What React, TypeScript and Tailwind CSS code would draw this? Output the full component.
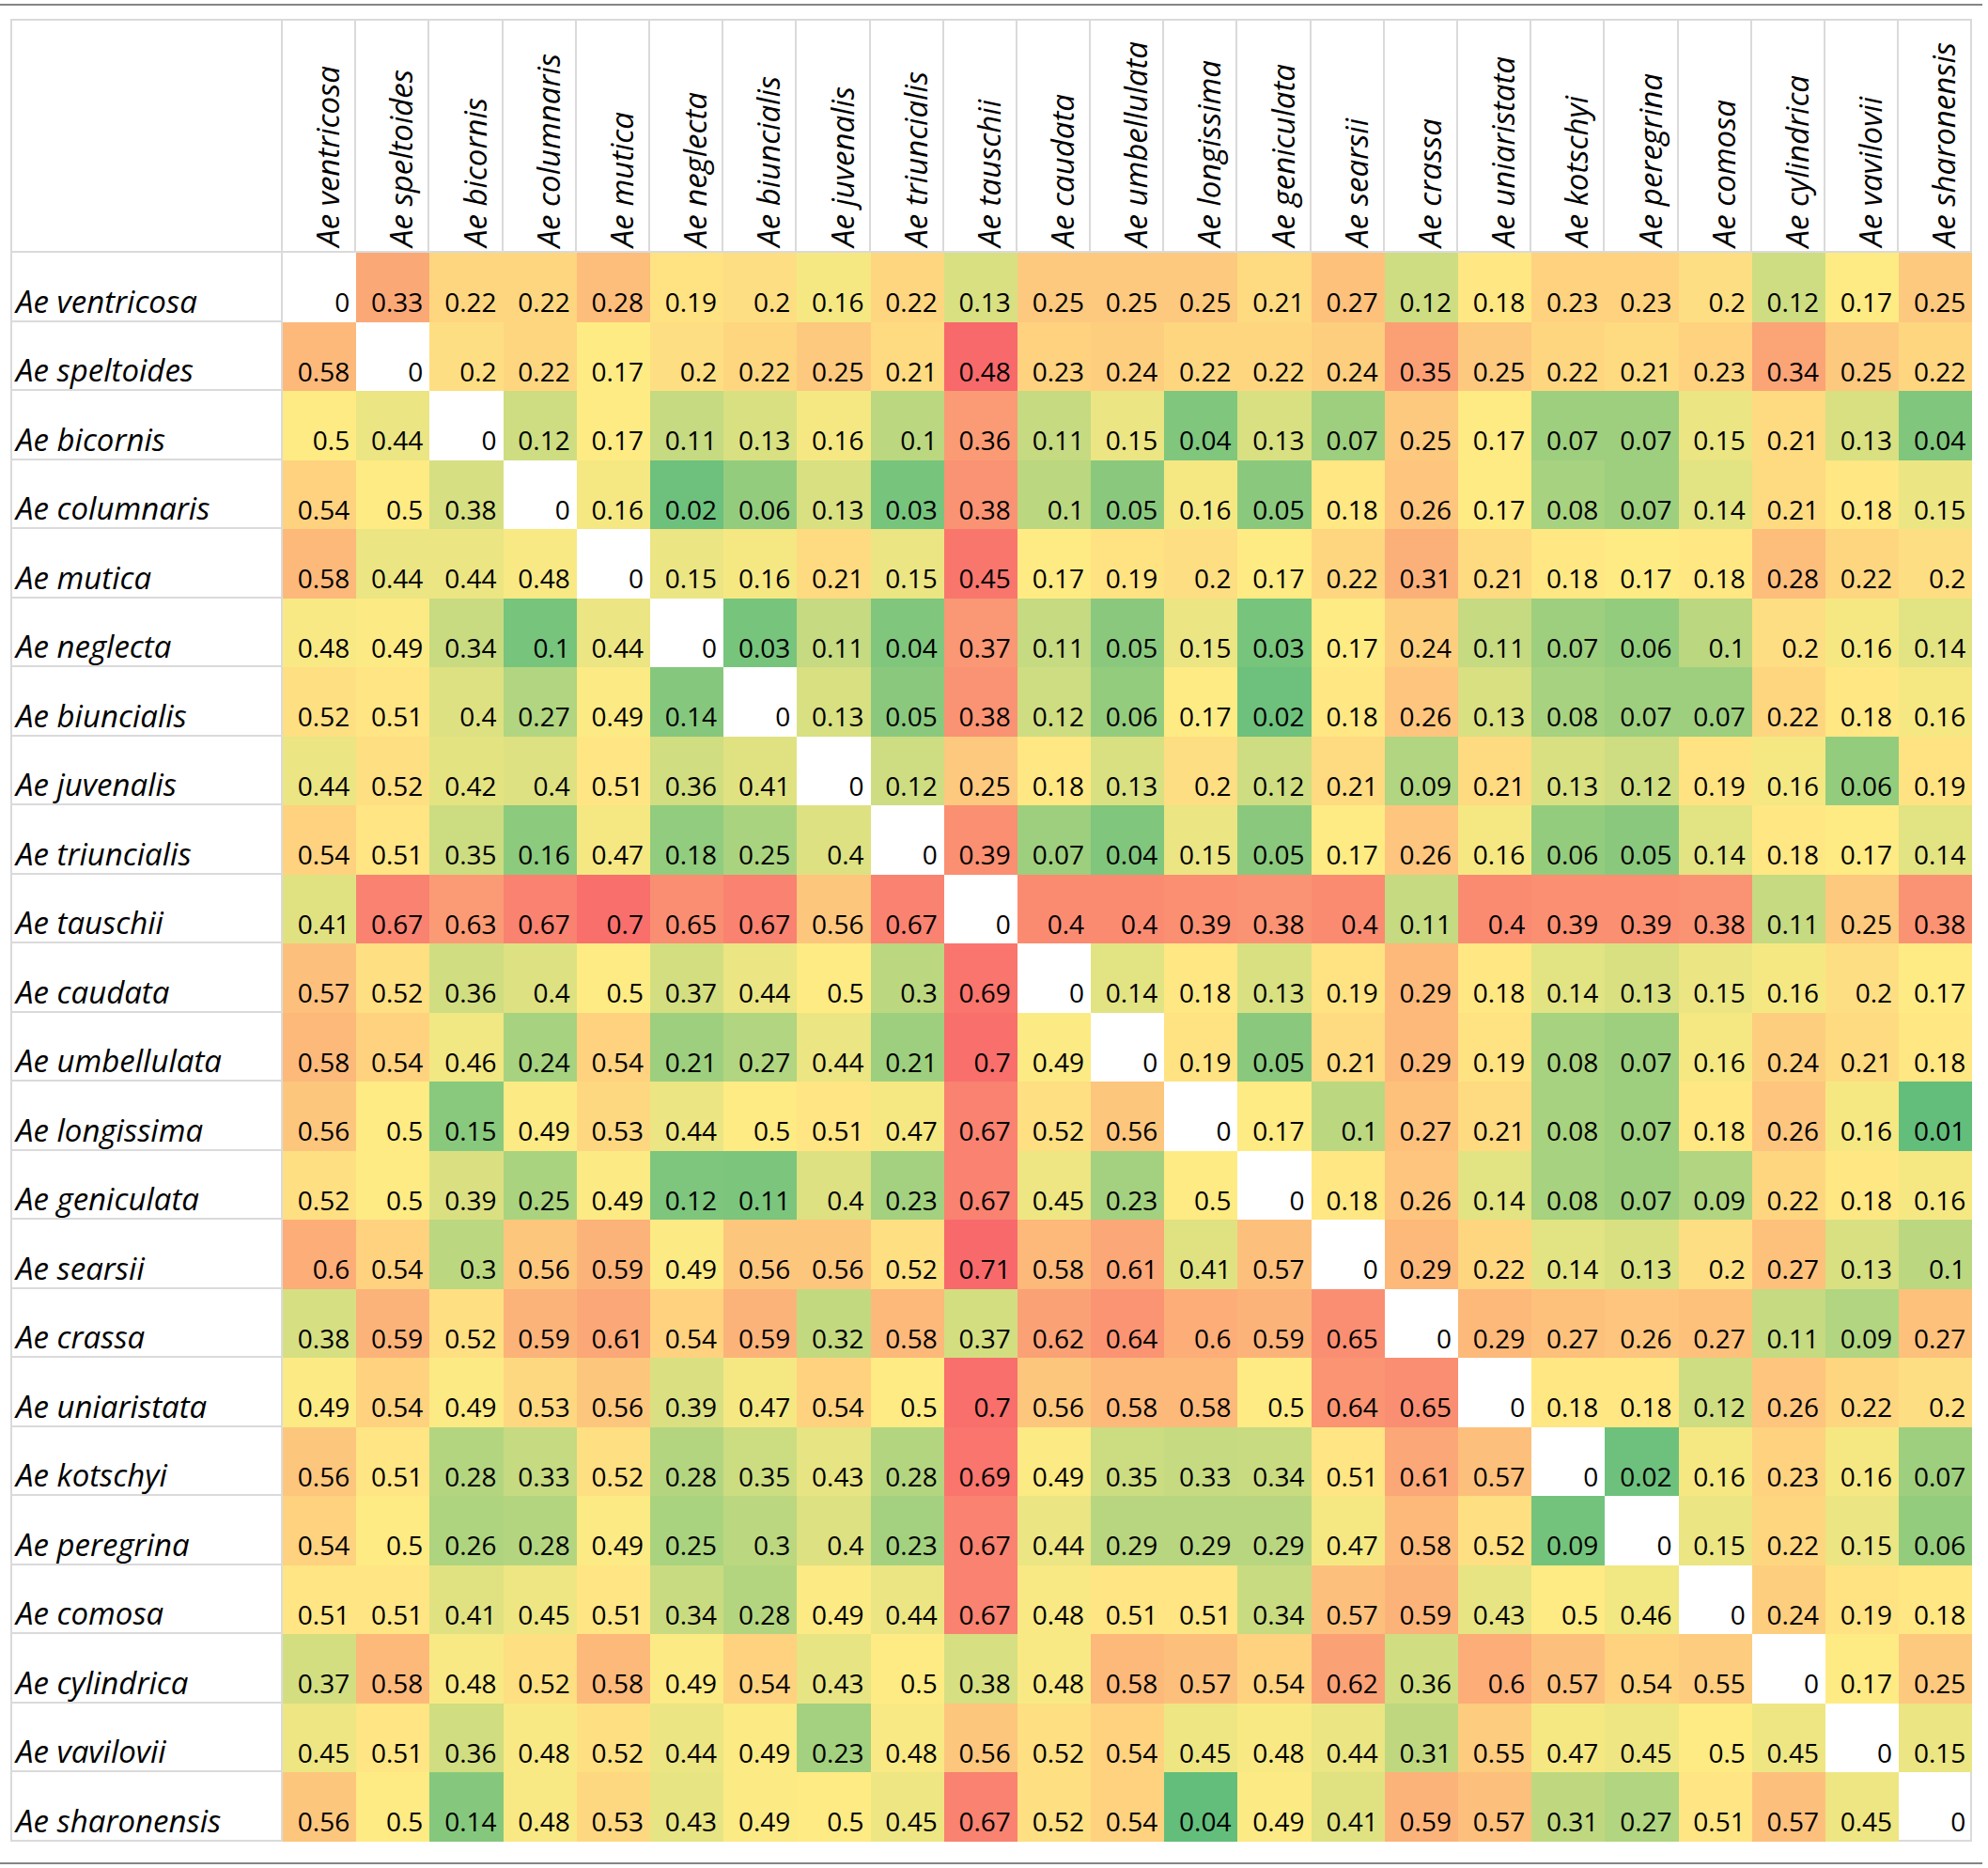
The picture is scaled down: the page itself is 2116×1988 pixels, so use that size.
import React, { Fragment } from "react";

const names = [
  "ventricosa", "speltoides", "bicornis", "columnaris", "mutica", "neglecta",
  "biuncialis", "juvenalis", "triuncialis", "tauschii", "caudata", "umbellulata",
  "longissima", "geniculata", "searsii", "crassa", "uniaristata", "kotschyi",
  "peregrina", "comosa", "cylindrica", "vavilovii", "sharonensis",
];

const data: number[][] = [
  [0, 0.33, 0.22, 0.22, 0.28, 0.19, 0.2, 0.16, 0.22, 0.13, 0.25, 0.25, 0.25, 0.21, 0.27, 0.12, 0.18, 0.23, 0.23, 0.2, 0.12, 0.17, 0.25],
  [0.58, 0, 0.2, 0.22, 0.17, 0.2, 0.22, 0.25, 0.21, 0.48, 0.23, 0.24, 0.22, 0.22, 0.24, 0.35, 0.25, 0.22, 0.21, 0.23, 0.34, 0.25, 0.22],
  [0.5, 0.44, 0, 0.12, 0.17, 0.11, 0.13, 0.16, 0.1, 0.36, 0.11, 0.15, 0.04, 0.13, 0.07, 0.25, 0.17, 0.07, 0.07, 0.15, 0.21, 0.13, 0.04],
  [0.54, 0.5, 0.38, 0, 0.16, 0.02, 0.06, 0.13, 0.03, 0.38, 0.1, 0.05, 0.16, 0.05, 0.18, 0.26, 0.17, 0.08, 0.07, 0.14, 0.21, 0.18, 0.15],
  [0.58, 0.44, 0.44, 0.48, 0, 0.15, 0.16, 0.21, 0.15, 0.45, 0.17, 0.19, 0.2, 0.17, 0.22, 0.31, 0.21, 0.18, 0.17, 0.18, 0.28, 0.22, 0.2],
  [0.48, 0.49, 0.34, 0.1, 0.44, 0, 0.03, 0.11, 0.04, 0.37, 0.11, 0.05, 0.15, 0.03, 0.17, 0.24, 0.11, 0.07, 0.06, 0.1, 0.2, 0.16, 0.14],
  [0.52, 0.51, 0.4, 0.27, 0.49, 0.14, 0, 0.13, 0.05, 0.38, 0.12, 0.06, 0.17, 0.02, 0.18, 0.26, 0.13, 0.08, 0.07, 0.07, 0.22, 0.18, 0.16],
  [0.44, 0.52, 0.42, 0.4, 0.51, 0.36, 0.41, 0, 0.12, 0.25, 0.18, 0.13, 0.2, 0.12, 0.21, 0.09, 0.21, 0.13, 0.12, 0.19, 0.16, 0.06, 0.19],
  [0.54, 0.51, 0.35, 0.16, 0.47, 0.18, 0.25, 0.4, 0, 0.39, 0.07, 0.04, 0.15, 0.05, 0.17, 0.26, 0.16, 0.06, 0.05, 0.14, 0.18, 0.17, 0.14],
  [0.41, 0.67, 0.63, 0.67, 0.7, 0.65, 0.67, 0.56, 0.67, 0, 0.4, 0.4, 0.39, 0.38, 0.4, 0.11, 0.4, 0.39, 0.39, 0.38, 0.11, 0.25, 0.38],
  [0.57, 0.52, 0.36, 0.4, 0.5, 0.37, 0.44, 0.5, 0.3, 0.69, 0, 0.14, 0.18, 0.13, 0.19, 0.29, 0.18, 0.14, 0.13, 0.15, 0.16, 0.2, 0.17],
  [0.58, 0.54, 0.46, 0.24, 0.54, 0.21, 0.27, 0.44, 0.21, 0.7, 0.49, 0, 0.19, 0.05, 0.21, 0.29, 0.19, 0.08, 0.07, 0.16, 0.24, 0.21, 0.18],
  [0.56, 0.5, 0.15, 0.49, 0.53, 0.44, 0.5, 0.51, 0.47, 0.67, 0.52, 0.56, 0, 0.17, 0.1, 0.27, 0.21, 0.08, 0.07, 0.18, 0.26, 0.16, 0.01],
  [0.52, 0.5, 0.39, 0.25, 0.49, 0.12, 0.11, 0.4, 0.23, 0.67, 0.45, 0.23, 0.5, 0, 0.18, 0.26, 0.14, 0.08, 0.07, 0.09, 0.22, 0.18, 0.16],
  [0.6, 0.54, 0.3, 0.56, 0.59, 0.49, 0.56, 0.56, 0.52, 0.71, 0.58, 0.61, 0.41, 0.57, 0, 0.29, 0.22, 0.14, 0.13, 0.2, 0.27, 0.13, 0.1],
  [0.38, 0.59, 0.52, 0.59, 0.61, 0.54, 0.59, 0.32, 0.58, 0.37, 0.62, 0.64, 0.6, 0.59, 0.65, 0, 0.29, 0.27, 0.26, 0.27, 0.11, 0.09, 0.27],
  [0.49, 0.54, 0.49, 0.53, 0.56, 0.39, 0.47, 0.54, 0.5, 0.7, 0.56, 0.58, 0.58, 0.5, 0.64, 0.65, 0, 0.18, 0.18, 0.12, 0.26, 0.22, 0.2],
  [0.56, 0.51, 0.28, 0.33, 0.52, 0.28, 0.35, 0.43, 0.28, 0.69, 0.49, 0.35, 0.33, 0.34, 0.51, 0.61, 0.57, 0, 0.02, 0.16, 0.23, 0.16, 0.07],
  [0.54, 0.5, 0.26, 0.28, 0.49, 0.25, 0.3, 0.4, 0.23, 0.67, 0.44, 0.29, 0.29, 0.29, 0.47, 0.58, 0.52, 0.09, 0, 0.15, 0.22, 0.15, 0.06],
  [0.51, 0.51, 0.41, 0.45, 0.51, 0.34, 0.28, 0.49, 0.44, 0.67, 0.48, 0.51, 0.51, 0.34, 0.57, 0.59, 0.43, 0.5, 0.46, 0, 0.24, 0.19, 0.18],
  [0.37, 0.58, 0.48, 0.52, 0.58, 0.49, 0.54, 0.43, 0.5, 0.38, 0.48, 0.58, 0.57, 0.54, 0.62, 0.36, 0.6, 0.57, 0.54, 0.55, 0, 0.17, 0.25],
  [0.45, 0.51, 0.36, 0.48, 0.52, 0.44, 0.49, 0.23, 0.48, 0.56, 0.52, 0.54, 0.45, 0.48, 0.44, 0.31, 0.55, 0.47, 0.45, 0.5, 0.45, 0, 0.15],
  [0.56, 0.5, 0.14, 0.48, 0.53, 0.43, 0.49, 0.5, 0.45, 0.67, 0.52, 0.54, 0.04, 0.49, 0.41, 0.59, 0.57, 0.31, 0.27, 0.51, 0.57, 0.45, 0],
];

type Scale = { min: number; mid: number; max: number };

function percentile(arr: number[], p: number): number {
  const s = [...arr].sort((a, b) => a - b);
  const r = p * (s.length - 1);
  const lo = Math.floor(r);
  const hi = Math.ceil(r);
  return s[lo] + (s[hi] - s[lo]) * (r - lo);
}

function makeScale(arr: number[]): Scale {
  return { min: Math.min(...arr), mid: percentile(arr, 0.5), max: Math.max(...arr) };
}

const upper: number[] = [];
const lower: number[] = [];
data.forEach((row, i) =>
  row.forEach((v, j) => {
    if (j > i) upper.push(v);
    else if (j < i) lower.push(v);
  })
);
const upperScale = makeScale(upper);
const lowerScale = makeScale(lower);

const GREEN = [99, 190, 123];
const YELLOW = [255, 235, 132];
const RED = [248, 105, 107];

function mix(a: number[], b: number[], t: number): string {
  const c = a.map((x, k) => Math.round(x + (b[k] - x) * Math.max(0, Math.min(1, t))));
  return `rgb(${c[0]}, ${c[1]}, ${c[2]})`;
}

function colorFor(v: number, s: Scale): string {
  if (v <= s.mid) return mix(GREEN, YELLOW, (v - s.min) / (s.mid - s.min || 1));
  return mix(YELLOW, RED, (v - s.mid) / (s.max - s.mid || 1));
}

export default function App() {
  return (
    <div className="w-[2116px] h-[1988px] bg-white pt-[4px] text-black font-['Open_Sans',sans-serif]">
      <div className="h-[2px] w-[2110px] bg-[#858585]" />
      <div className="ml-[11px] mt-[14px] grid grid-cols-[290px_repeat(23,78.2px)] grid-rows-[249px_repeat(23,73.5px)]">
        <div className="border-2 border-[#dadada]" />
        {names.map((n) => (
          <div
            key={n}
            className="flex items-end justify-end border-t-2 border-r-2 border-b-2 border-[#dadada] pb-[4px] pr-[8px]"
          >
            <span className="[writing-mode:vertical-rl] rotate-180 whitespace-nowrap italic text-[33px] leading-[40px]">
              Ae {n}
            </span>
          </div>
        ))}
        {data.map((row, i) => (
          <Fragment key={i}>
            <div className="flex items-end border-l-2 border-r-2 border-b-2 border-[#dadada] pl-[4px] pb-0 whitespace-nowrap italic text-[33px] leading-[40px]">
              Ae {names[i]}
            </div>
            {row.map((v, j) => {
              const diag = i === j;
              const last = diag && i === data.length - 1;
              const bg = diag ? "#ffffff" : colorFor(v, j > i ? upperScale : lowerScale);
              return (
                <div
                  key={j}
                  className={
                    last
                      ? "flex items-end justify-end border-r-2 border-b-2 border-[#dadada] pr-[5px] pb-[2.5px] text-[28px] leading-[33px]"
                      : "flex items-end justify-end pr-[7px] pb-[4.5px] text-[28px] leading-[33px]"
                  }
                  style={{ backgroundColor: bg }}
                >
                  {String(v)}
                </div>
              );
            })}
          </Fragment>
        ))}
      </div>
      <div className="mt-[22px] h-[2px] w-[2110px] bg-[#858585]" />
    </div>
  );
}
